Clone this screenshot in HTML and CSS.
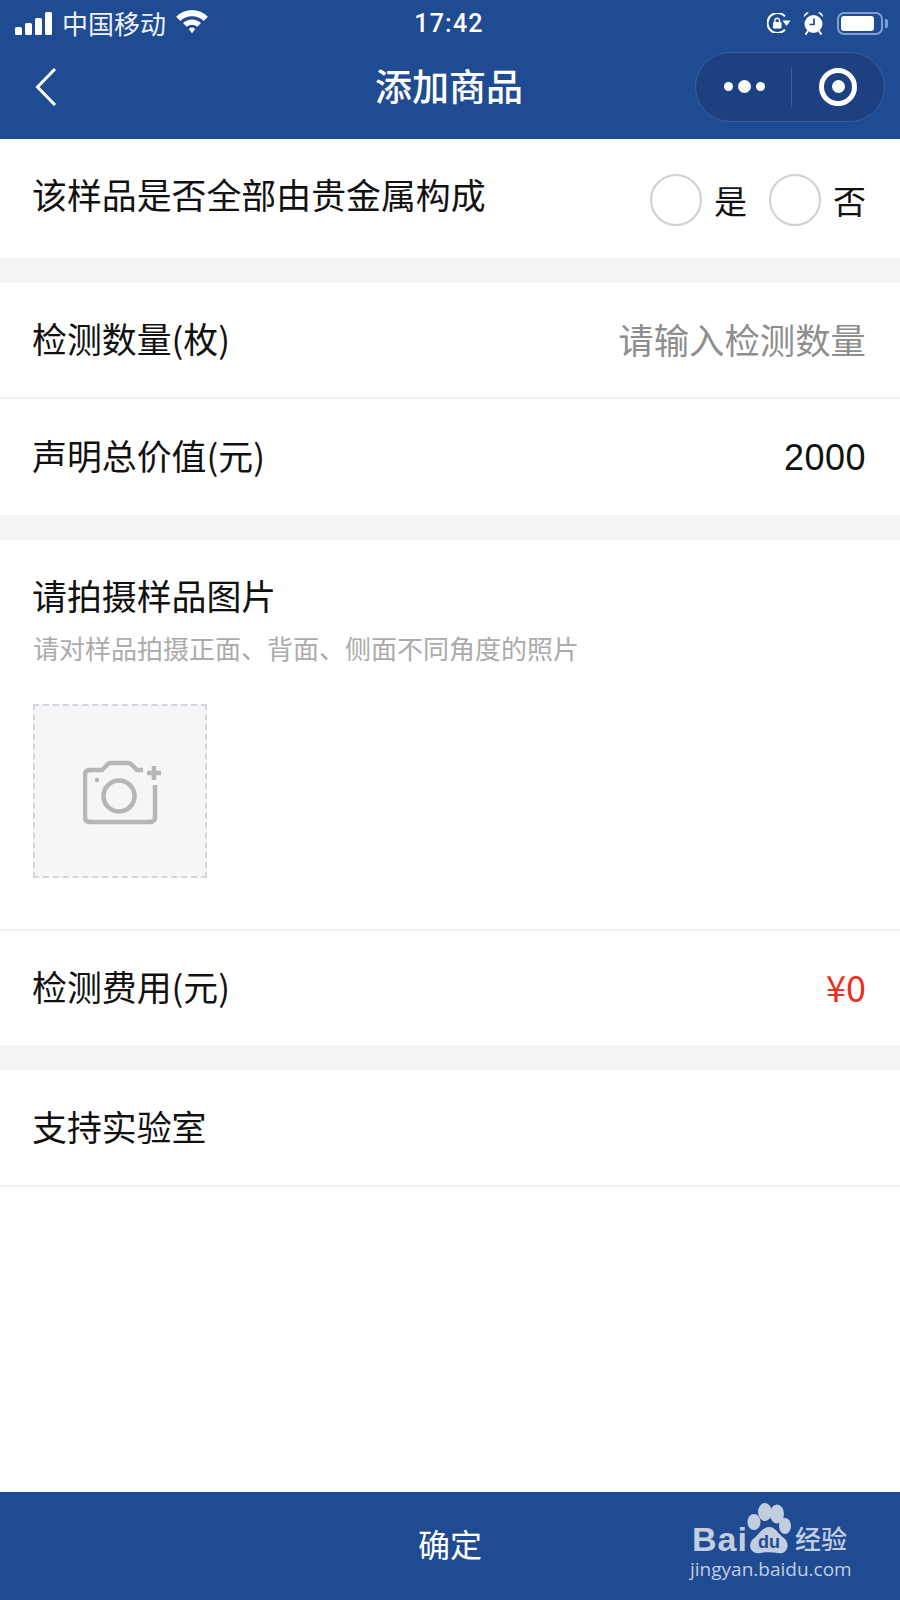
FILE: index.html
```html
<!DOCTYPE html>
<html lang="zh-CN">
<head>
    <meta charset="UTF-8">
    <meta name="viewport" content="width=device-width, initial-scale=1.0">
    <title>添加商品</title>
    <link rel="stylesheet" href="styles.css">
</head>
<body>
    <div class="page">
        <header class="header">
            <div class="status-bar">
                <div class="status-left">
                    <div class="signal"><i class="s1"></i><i class="s2"></i><i class="s3"></i><i class="s4"></i></div>
                    <span class="carrier">中国移动</span>
                    <svg class="wifi" width="36" height="26" viewBox="0 0 34 24">
                        <path d="M2 8 A21 21 0 0 1 32 8 L28 12 A16 16 0 0 0 6 12 Z" fill="#fff"/>
                        <path d="M8.500 14 A12 12 0 0 1 25.500 14 L22 17.500 A7.500 7.500 0 0 0 12 17.500 Z" fill="#fff"/>
                        <path d="M14 19.500 A4.500 4.500 0 0 1 20 19.500 L17 23.500 Z" fill="#fff"/>
                    </svg>
                </div>
                <div class="clock">17:42</div>
                <div class="status-right">
                    <svg class="icon-lock" width="24" height="20" viewBox="0 0 24 20">
                        <path d="M18 3.400 A10 10 0 1 0 18 16.600" fill="none" stroke="#fff" stroke-width="2"/>
                        <path d="M15.500 7.500 L23.500 7.500 L19.500 13 Z" fill="#fff"/>
                        <rect x="6" y="9" width="8.500" height="6.500" rx="1" fill="#fff"/>
                        <path d="M8 9 V7.500 A2.200 2.200 0 0 1 12.500 7.500 V9" fill="none" stroke="#fff" stroke-width="1.400"/>
                    </svg>
                    <svg class="icon-alarm" width="21" height="24" viewBox="0 0 21 24">
                        <circle cx="10.500" cy="13" r="9" fill="#fff"/>
                        <path d="M11 7.500 V13.500 H6.500" fill="none" stroke="#1f4b93" stroke-width="1.700"/>
                        <path d="M1 6 A4 4 0 0 1 6 1.500 Z M20 6 A4 4 0 0 0 15 1.500 Z" fill="#fff"/>
                        <path d="M5 20 L2.500 23.500 M16 20 L18.500 23.500" stroke="#fff" stroke-width="2"/>
                    </svg>
                    <div class="battery"><div class="battery-fill"></div></div>
                    <div class="battery-tip"></div>
                </div>
            </div>
            <div class="nav-bar">
                <svg class="back" width="24" height="38" viewBox="0 0 24 38">
                    <path d="M20 1 L2.500 19 L20 37" fill="none" stroke="#fff" stroke-width="3"/>
                </svg>
                <h1 class="title">添加商品</h1>
                <div class="capsule">
                    <div class="capsule-dots"><i class="dot"></i><i class="dot dot-big"></i><i class="dot"></i></div>
                    <div class="capsule-line"></div>
                    <div class="capsule-close"><i></i></div>
                </div>
            </div>
        </header>

        <section class="row row-first">
            <span class="label">该样品是否全部由贵金属构成</span>
            <div class="radios">
                <span class="radio"></span><span class="radio-text">是</span>
                <span class="radio"></span><span class="radio-text">否</span>
            </div>
        </section>
        <div class="gap"></div>

        <section class="row">
            <span class="label">检测数量(枚)</span>
            <span class="placeholder">请输入检测数量</span>
        </section>
        <section class="row row-last">
            <span class="label">声明总价值(元)</span>
            <span class="value">2000</span>
        </section>
        <div class="gap"></div>

        <section class="photo">
            <div class="label">请拍摄样品图片</div>
            <div class="hint">请对样品拍摄正面、背面、侧面不同角度的照片</div>
            <div class="upload">
                <svg width="80" height="66" viewBox="0 0 80 66">
                    <path d="M60 10 H54 L48 4 Q47 3 45 3 H28 Q26 3 25 4 L19 10 H7 Q2 10 2 15 V57 Q2 62 7 62 H67 Q72 62 72 57 V25" fill="none" stroke="#b5b6b8" stroke-width="4.500"/>
                    <circle cx="36" cy="36" r="15.500" fill="none" stroke="#b5b6b8" stroke-width="4.500"/>
                    <circle cx="14" cy="20" r="2.200" fill="#b5b6b8"/>
                    <path d="M71 6 V20 M64 13 H78" stroke="#b5b6b8" stroke-width="4.500"/>
                </svg>
            </div>
        </section>
        <section class="row row-fee">
            <span class="label">检测费用(元)</span>
            <span class="value price">¥0</span>
        </section>
        <div class="gap"></div>

        <section class="row row-lab">
            <span class="label">支持实验室</span>
        </section>

        <footer class="footer">
            <span class="confirm">确定</span>
            <div class="watermark">
                <div class="wm-top">
                    <span class="wm-bai">Bai</span>
                    <svg class="wm-paw" width="44" height="52" viewBox="0 0 44 52">
                        <ellipse cx="7" cy="19" rx="6.500" ry="8" fill="#c3cde0"/>
                        <ellipse cx="18" cy="9" rx="7" ry="9" fill="#c3cde0"/>
                        <ellipse cx="30" cy="11" rx="7" ry="9.500" fill="#c3cde0"/>
                        <ellipse cx="38" cy="23" rx="6" ry="8" fill="#c3cde0"/>
                        <path d="M22 24 C29 24 31 31 37 35 C44 41 40 52 31 50 C25 49 19 49 13 50 C4 52 0 42 6 36 C12 32 15 24 22 24 Z" fill="#c3cde0"/>
                        <text x="22" y="45" text-anchor="middle" class="wm-du">du</text>
                    </svg>
                    <span class="wm-cn">经验</span>
                </div>
                <div class="wm-url">jingyan.baidu.com</div>
            </div>
        </footer>
    </div>
</body>
</html>
```

FILE: styles.css
```css
* {
    box-sizing: border-box;
}

body {
    margin: 0;
    background-color: #fff;
    color: #111;
}

.page {
    width: 900px;
    height: 1600px;
    display: flex;
    flex-direction: column;
    font-family: "Noto Sans CJK SC", sans-serif;
}

.header {
    height: 139px;
    background-color: #1f4b93;
    color: #fff;
}

.status-bar {
    height: 46px;
    padding: 0 12px 0 15px;
    display: flex;
    align-items: center;
    justify-content: space-between;
}

.status-left {
    width: 300px;
    display: flex;
    align-items: center;
}

.signal {
    display: flex;
    align-items: flex-end;
    gap: 3px;
    height: 23px;
}

.signal i {
    width: 7px;
    background: #fff;
    border-radius: 1.500px;
}

.s1 { height: 8px; }
.s2 { height: 12px; }
.s3 { height: 17px; }
.s4 { height: 23px; }

.carrier {
    margin-left: 10px;
    font-size: 26px;
    line-height: 30px;
    color: #eef2f8;
}

.wifi {
    margin-left: 8px;
    margin-bottom: 4px;
}

.clock {
    font-family: "Roboto", sans-serif;
    font-size: 25px;
    font-weight: 500;
    letter-spacing: 1.200px;
    margin-left: -5px;
}

.status-right {
    width: 300px;
    display: flex;
    align-items: center;
    justify-content: flex-end;
}

.icon-lock {
    margin-right: 12px;
}

.icon-alarm {
    margin-right: 13px;
}

.battery {
    width: 46px;
    height: 23px;
    padding: 2px;
    border: 2px solid #7f9dce;
    border-radius: 7px;
}

.battery-fill {
    width: 33px;
    height: 100%;
    background: #fff;
    border-radius: 3px;
}

.battery-tip {
    width: 3px;
    height: 9px;
    margin-left: 2px;
    background: #7f9dce;
    border-radius: 0 2px 2px 0;
}

.nav-bar {
    position: relative;
    height: 93px;
    padding: 0 15px 0 35px;
    display: flex;
    align-items: center;
    justify-content: space-between;
}

.back {
    margin-bottom: 12px;
}

.title {
    position: absolute;
    left: 0;
    width: 898px;
    top: 16px;
    margin: 0;
    text-align: center;
    font-size: 37px;
    line-height: 46px;
    font-weight: 500;
}

.capsule {
    width: 190px;
    height: 70px;
    margin-bottom: 12px;
    display: flex;
    align-items: center;
    background-color: #1c4082;
    border: 1px solid #3a5f9f;
    border-radius: 35px;
}

.capsule-dots {
    flex: 1;
    display: flex;
    align-items: center;
    justify-content: center;
    gap: 5px;
    padding-left: 2px;
}

.dot {
    width: 9px;
    height: 9px;
    background: #fff;
    border-radius: 50%;
}

.dot-big {
    width: 13px;
    height: 13px;
}

.capsule-line {
    width: 1px;
    height: 40px;
    background: #3a5f9f;
}

.capsule-close {
    width: 92px;
    display: flex;
    justify-content: center;
}

.capsule-close i {
    width: 38px;
    height: 38px;
    border: 5px solid #fff;
    border-radius: 50%;
    display: flex;
    align-items: center;
    justify-content: center;
}

.capsule-close i::after {
    content: "";
    width: 13px;
    height: 13px;
    background: #fff;
    border-radius: 50%;
}

.row {
    height: 116px;
    padding: 0 34px 4px 32px;
    display: flex;
    align-items: center;
    justify-content: space-between;
    border-bottom: 2px solid #f3f3f3;
    flex-shrink: 0;
}

.row-last {
    border-bottom: 0;
}

.row-first {
    height: 119px;
    border-bottom: 0;
    padding-bottom: 10px;
}

.row-fee {
    height: 114px;
    border-bottom: 0;
    padding-bottom: 5px;
}

.row-lab {
    height: 117px;
}

.gap {
    height: 25px;
    background-color: #f5f5f5;
    flex-shrink: 0;
}

.label {
    font-size: 34.900px;
    line-height: 46px;
    color: #111;
}

.placeholder {
    font-size: 35.400px;
    color: #8e8e8e;
}

.value {
    font-family: "Liberation Sans", sans-serif;
    font-size: 36px;
    letter-spacing: 0.500px;
    margin-top: 6px;
    color: #111;
}

.price {
    margin-top: 0;
    letter-spacing: 0;
    color: #e8321f;
    font-family: "Noto Sans CJK SC", sans-serif;
}

.radios {
    display: flex;
    align-items: center;
    margin-top: 12px;
}

.radio {
    width: 52px;
    height: 52px;
    border: 2px solid #d0d0d0;
    border-radius: 50%;
}

.radio-text {
    font-size: 33px;
    margin-left: 12px;
    margin-right: 22px;
    line-height: 44px;
}

.radio-text:last-child {
    margin-right: 0;
}

.photo {
    height: 391px;
    padding: 32px 33px 0;
    border-bottom: 2px solid #f3f3f3;
    flex-shrink: 0;
}

.photo .label {
    margin-left: -1px;
}

.hint {
    margin-top: 12px;
    font-size: 26px;
    line-height: 36px;
    color: #ababab;
}

.upload {
    width: 174px;
    height: 174px;
    margin-top: 38px;
    display: flex;
    align-items: center;
    justify-content: center;
    background-color: #f5f6f8;
    border: 2px dashed #d4d6da;
}

.upload svg {
    margin-left: 6px;
    margin-top: 4px;
}

.footer {
    position: relative;
    margin-top: auto;
    height: 108px;
    padding-bottom: 6px;
    display: flex;
    align-items: center;
    justify-content: center;
    background-color: #1f4b93;
    color: #fff;
}

.confirm {
    font-size: 32px;
}

.watermark {
    position: absolute;
    left: 690px;
    top: 11px;
    width: 170px;
    color: #c3cde0;
}

.wm-top {
    display: flex;
    align-items: flex-end;
    height: 52px;
}

.wm-bai {
    font-family: "Liberation Sans", sans-serif;
    font-weight: 700;
    font-size: 34px;
    line-height: 32px;
    letter-spacing: 1px;
    margin-left: 2px;
    width: 56px;
}

.wm-paw {
    margin-left: -1px;
    flex-shrink: 0;
}

.wm-du {
    font-family: "Liberation Sans", sans-serif;
    font-weight: 700;
    font-size: 18px;
    fill: #1f4b93;
}

.wm-cn {
    font-size: 26px;
    line-height: 34px;
    font-weight: 500;
    margin-left: 4px;
    white-space: nowrap;
}

.wm-url {
    font-family: "Open Sans", sans-serif;
    font-size: 19px;
    line-height: 24px;
    margin-top: 2px;
    white-space: nowrap;
}
```
